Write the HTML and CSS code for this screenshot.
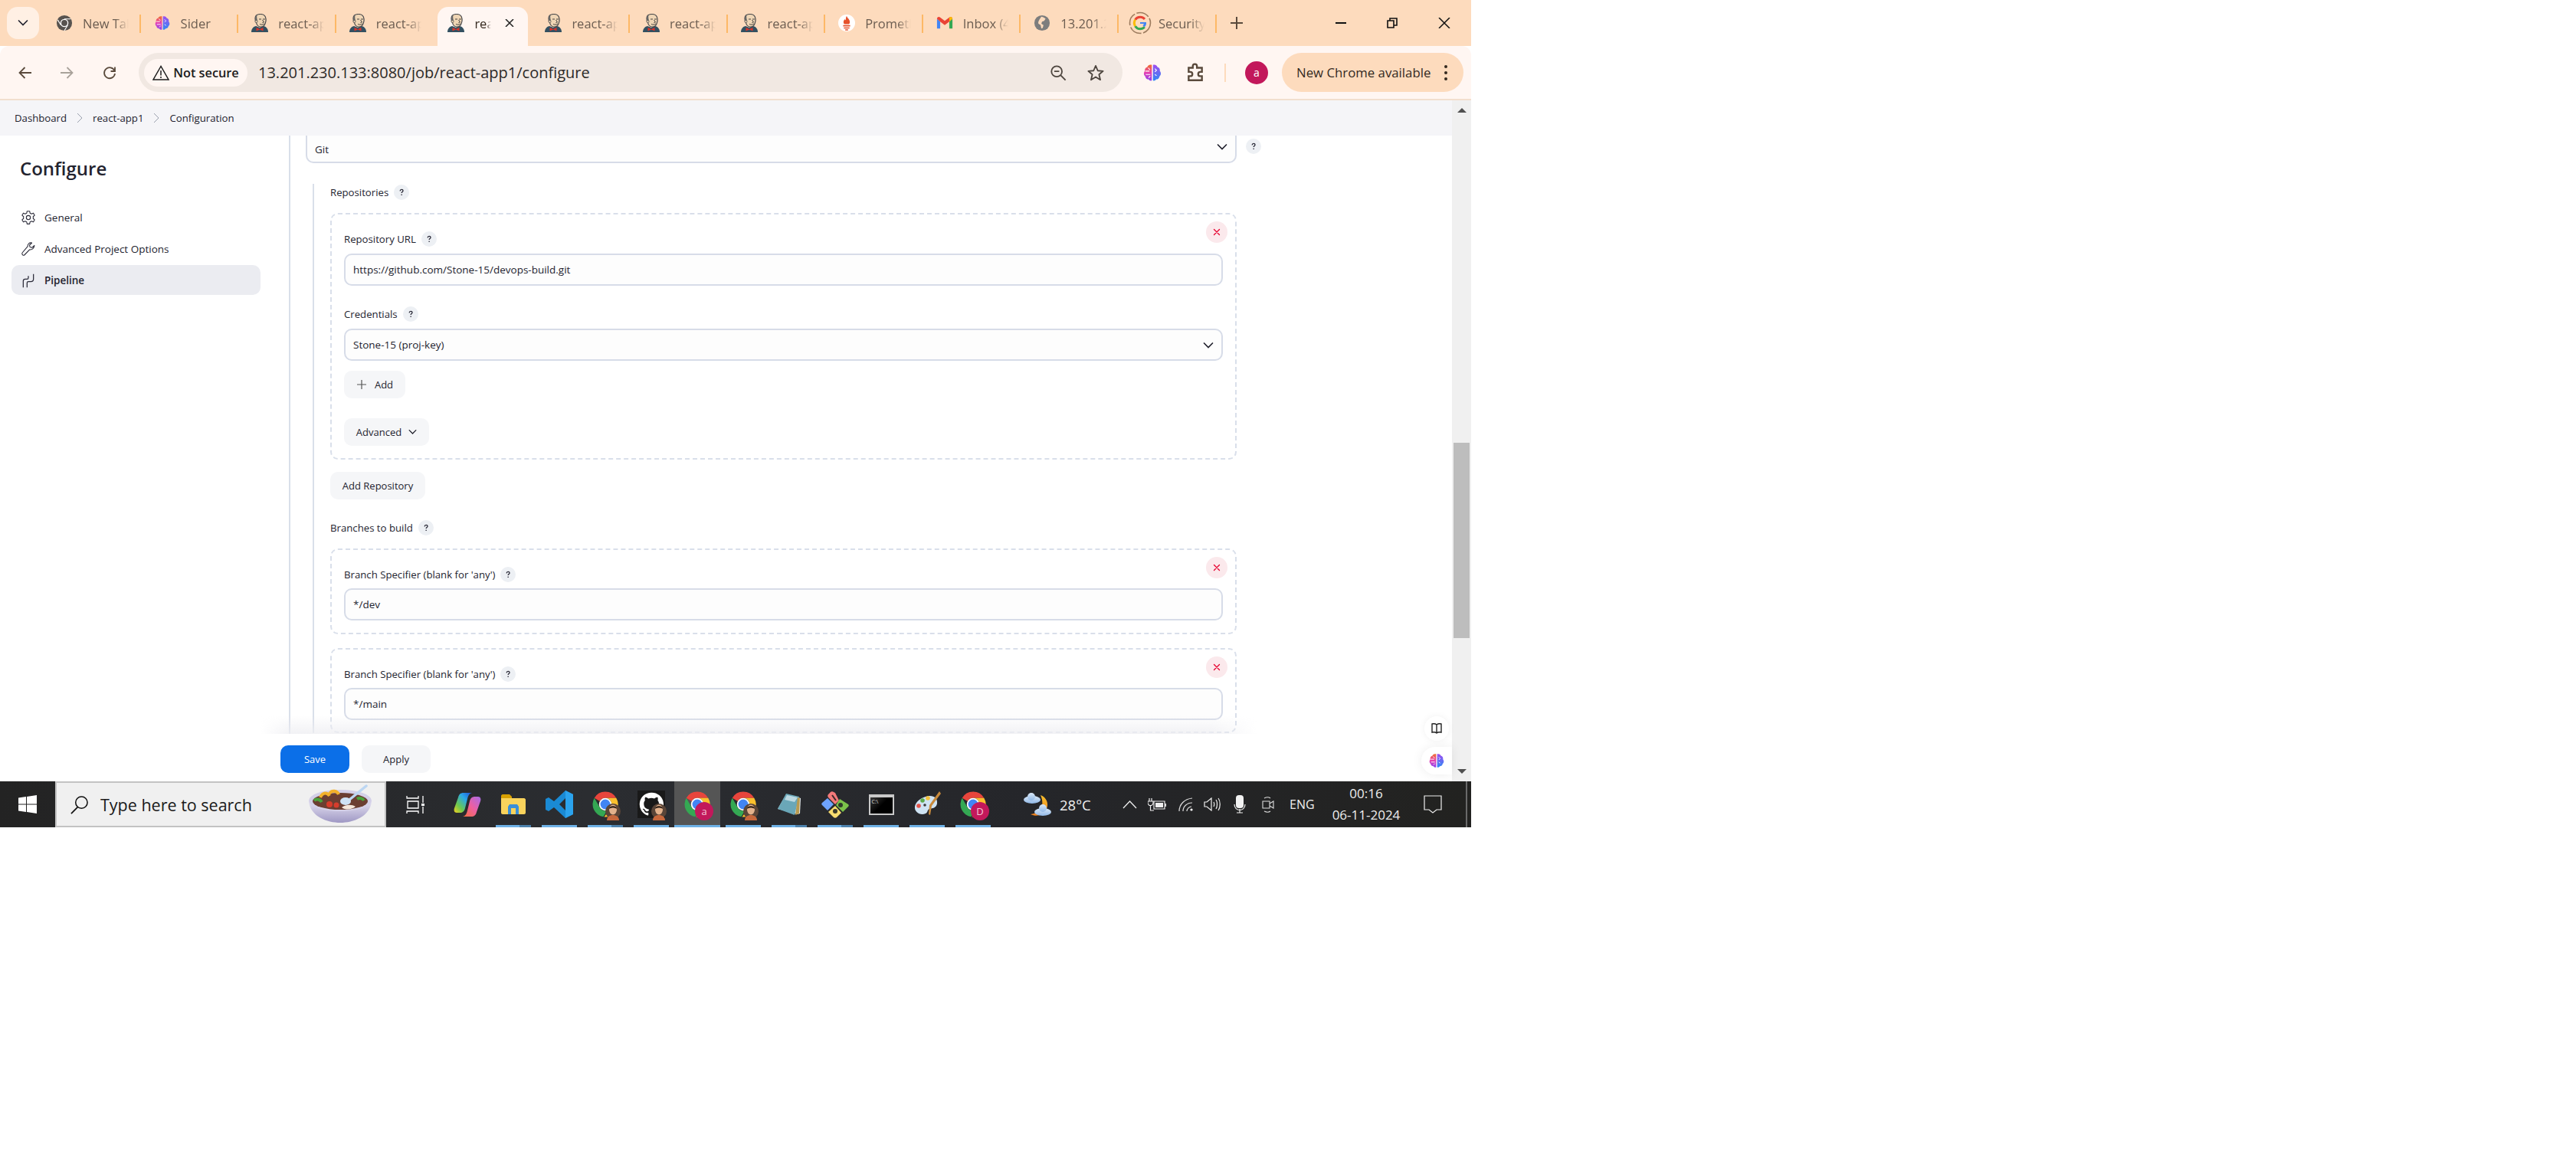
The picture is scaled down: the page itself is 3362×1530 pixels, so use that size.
FILE: index.html
```html
<!DOCTYPE html>
<html lang="en">
<head>
  <meta charset="UTF-8">
  <title>react-app1 Config [Jenkins]</title>
  <link rel="stylesheet" href="styles.css">
</head>
<body>

  <!-- shared icons -->
  <svg class="sprites" width="0" height="0">
    <defs>
      <linearGradient id="brainLeft" x1="0" y1="0" x2="0" y2="1">
        <stop offset="0" stop-color="#f0702a"/><stop offset=".5" stop-color="#e63fb4"/><stop offset="1" stop-color="#8b45f0"/>
      </linearGradient>
      <linearGradient id="brainRight" x1="0" y1="0" x2="0" y2="1">
        <stop offset="0" stop-color="#a04df0"/><stop offset="1" stop-color="#2f8af5"/>
      </linearGradient>
      <linearGradient id="copilotA" x1="1" y1="0" x2="0" y2="1">
        <stop offset="0" stop-color="#1f4fd8"/><stop offset=".35" stop-color="#2aa8e8"/><stop offset=".7" stop-color="#6cc94e"/><stop offset="1" stop-color="#f5d020"/>
      </linearGradient>
      <linearGradient id="copilotB" x1="1" y1="0" x2="0" y2="1">
        <stop offset="0" stop-color="#a86be8"/><stop offset=".5" stop-color="#ee5fa0"/><stop offset="1" stop-color="#f4703a"/>
      </linearGradient>
      <linearGradient id="bowlGrad" x1="0" y1="0" x2="0" y2="1">
        <stop offset="0" stop-color="#e4e1f2"/><stop offset="1" stop-color="#9f98c4"/>
      </linearGradient>
      <linearGradient id="moonGrad" x1="0" y1="0" x2="0" y2="1">
        <stop offset="0" stop-color="#f8c02c"/><stop offset="1" stop-color="#ee7f1c"/>
      </linearGradient>
      <linearGradient id="cloudGrad" x1="0" y1="0" x2="0" y2="1">
        <stop offset="0" stop-color="#dbe9f8"/><stop offset="1" stop-color="#8fb7e6"/>
      </linearGradient>
    </defs>

    <symbol id="i-jenkins" viewBox="0 0 22 24">
      <path d="M0 24c0-4 2-7 6-8l5 2 5-2c4 1 6 4 6 8z" fill="#335061"/>
      <path d="M5 6C5 2.500 8 .5 12 .5c4 0 6.500 2.500 7 6 .5 3-.5 5-1 6.500-1 2.500-3.500 4.500-6.500 4-3-.5-4.500-3-5-5.500C5 10 5 8 5 6z" fill="#f0d6b5" stroke="#49494b" stroke-width="1.200"/>
      <path d="M5 6c0-2 1-3.500 2.500-4.500-.5 2.500-.3 5 .5 7L5.500 11C5 9 5 7.500 5 6z" fill="#666"/>
      <circle cx="6.500" cy="10" r="1.600" fill="#f0d6b5" stroke="#49494b" stroke-width=".7"/>
      <path d="M10 7h3M15 7h3M14.500 8l2 3-2 .5M11 13.500c2 1 4 .8 6-.5" fill="none" stroke="#333" stroke-width=".9"/>
      <path d="M6.500 18l4.500 2 4.500-2v4.500L11 20.500l-4.500 2z" fill="#d8332a"/>
    </symbol>

    <symbol id="i-chrome" viewBox="0 0 24 24">
      <path d="M12 1a11 11 0 0 1 9.530 5.500H12a5.500 5.500 0 0 0-4.760 2.750L2.470 6.500A11 11 0 0 1 12 1z" fill="#e8453c"/>
      <path d="M2.470 6.500l4.770 8.250A5.500 5.500 0 0 0 13.540 17.290L10.300 22.870A11 11 0 0 1 2.470 6.500z" fill="#34a853"/>
      <path d="M21.530 6.500H12a5.500 5.500 0 0 1 4.760 8.250L11 23a11 11 0 0 0 10.530-16.500z" fill="#fbc02d"/>
      <circle cx="12" cy="12" r="5.500" fill="#fff"/><circle cx="12" cy="12" r="4.300" fill="#4285f4"/>
    </symbol>

    <symbol id="i-chrome-mono" viewBox="0 0 24 24">
      <circle cx="12" cy="12" r="11" fill="#57534f"/>
      <circle cx="12" cy="12" r="5.800" fill="#fff"/><circle cx="12" cy="12" r="4.300" fill="#57534f"/>
      <path d="M12 6.200h9M7 15l-4.500-7.500M16.800 15L12 23" stroke="#fff" stroke-width="1.200"/>
    </symbol>

    <symbol id="i-sider" viewBox="0 0 24 24">
      <path d="M11.300 2.500C8 1.800 6.500 3.500 6 5 3.500 5.500 2.500 8 3 10c-1.800 2-1.500 5 .5 6.500.2 2.500 2.500 3.500 4 3.300 1 1.800 3 2.200 3.800 1.500z" fill="url(#brainLeft)"/>
      <path d="M12.700 2.500C16 1.800 17.500 3.500 18 5c2.500.5 3.500 3 3 5 1.800 2 1.500 5-.5 6.500-.2 2.500-2.500 3.500-4 3.300-1 1.800-3 2.200-3.800 1.500z" fill="url(#brainRight)"/>
      <path d="M3.500 10h5M4 14h5.500M7 6l2 2.500M7.500 18l2-2M15 7l2 2-2 2M15 14l2 1.500" stroke="#fff" stroke-width="1" fill="none"/>
    </symbol>

    <symbol id="i-prometheus" viewBox="0 0 24 24">
      <circle cx="12" cy="12" r="12" fill="#fff"/>
      <path d="M12 2c.5 3 4.500 4.500 4.500 8.500 0 1.500-.7 2.500-1.200 3H8.700c-.5-.5-1.200-1.500-1.200-3 0-2 1.300-2.800 1.800-4 .4 1 1 1.300 1.300 1.500C10.800 6 11 3.500 12 2z" fill="#e6522c"/>
      <path d="M7 15h10v2H7zM8 18.200h8V20H8zM10 21h4v1.500h-4z" fill="#e6522c"/>
    </symbol>

    <symbol id="i-gmail" viewBox="0 0 24 24">
      <path d="M1 6v14h4.500V10z" fill="#4285f4"/>
      <path d="M23 6v14h-4.500V10z" fill="#34a853"/>
      <path d="M1 6c0-2.500 2.500-3.500 4.500-2L12 9l6.500-5c2-1.500 4.500-.5 4.500 2l-4.500 4-6.500 5-6.500-5z" fill="#ea4335"/>
      <path d="M18.500 4C20.500 2.500 23 3.500 23 6l-4.500 4z" fill="#fbbc05"/>
    </symbol>

    <symbol id="i-globe" viewBox="0 0 24 24">
      <circle cx="12" cy="12" r="11" fill="#7d7d7d"/>
      <path d="M11 3c3 .5 5 2 6 3l-2 3-3 1-1 3 3 2-1 4-2 1-1-5-3-2c-1-2 .5-5 4-10z" fill="#fddbbd"/>
    </symbol>

    <symbol id="i-google" viewBox="0 0 30 30">
      <circle cx="15" cy="15" r="13.500" fill="none" stroke="#9c7b5e" stroke-width="1.600" stroke-dasharray="17 2.500"/>
      <path d="M21 10a8 8 0 0 0-6-2.700c-2.800 0-5 1.300-6.400 3.500" fill="none" stroke="#ea4335" stroke-width="3"/>
      <path d="M8.600 10.800a8 8 0 0 0 0 8.400" fill="none" stroke="#fbbc05" stroke-width="3"/>
      <path d="M8.600 19.200c1.400 2.200 3.600 3.500 6.400 3.500 2.500 0 4.500-1 5.800-2.500" fill="none" stroke="#34a853" stroke-width="3"/>
      <path d="M15 14h8c.3 2.500-.5 4.600-2.200 6.200l-2.400-1.900c.8-.6 1.300-1.400 1.500-2.300H15z" fill="#4285f4"/>
    </symbol>

    <symbol id="i-help" viewBox="0 0 16 16">
      <path d="M5.500 5.800C5.700 4 7 3.200 8.200 3.200c1.500 0 2.500 1 2.500 2.200 0 2-2.500 2-2.500 4" fill="none" stroke="#2a2a38" stroke-width="1.800"/>
      <circle cx="8.200" cy="12.300" r="1.100" fill="#2a2a38"/>
    </symbol>

    <symbol id="i-chev" viewBox="0 0 14 10">
      <path d="M1.500 2l5.500 5.500L12.500 2" fill="none" stroke="#23232f" stroke-width="1.700" stroke-linecap="round"/>
    </symbol>

    <symbol id="i-cross" viewBox="0 0 10 10">
      <path d="M1.500 1.500l7 7M8.500 1.500l-7 7" stroke="#e6002e" stroke-width="1.300" stroke-linecap="round"/>
    </symbol>

    <symbol id="i-avatar" viewBox="0 0 20 24">
      <circle cx="10" cy="12" r="10" fill="#5a4538"/>
      <ellipse cx="10" cy="10" rx="5" ry="6.500" fill="#e3b28c"/>
      <path d="M5 9c0-5 10-5 10 0-2.500-2-7.500-2-10 0z" fill="#2a1c14"/>
      <path d="M2 24c0-5 4-7 8-7s8 2 8 7z" fill="#c7683c"/>
    </symbol>
  </svg>

  <div class="screen">

    <div class="tabstrip">
      <button class="tab-search">
        <svg width="14" height="10"><use href="#i-chev"/></svg>
      </button>
      <div class="tab"><svg class="tab-icon"><use href="#i-chrome-mono"/></svg><span class="tab-title">New Tab</span></div>
      <div class="tab"><svg class="tab-icon"><use href="#i-sider"/></svg><span class="tab-title">Sider</span></div>
      <div class="tab"><svg class="tab-icon"><use href="#i-jenkins"/></svg><span class="tab-title">react-app1</span></div>
      <div class="tab tab-nosep"><svg class="tab-icon"><use href="#i-jenkins"/></svg><span class="tab-title">react-app1</span></div>
      <div class="tab tab-active">
        <svg class="tab-icon"><use href="#i-jenkins"/></svg><span class="tab-title">react-app1</span>
        <svg class="tab-close" width="12" height="10" viewBox="0 0 12 10"><path d="M1 0l10 10M11 0L1 10" stroke="#222" stroke-width="1.500"/></svg>
      </div>
      <div class="tab"><svg class="tab-icon"><use href="#i-jenkins"/></svg><span class="tab-title">react-app1</span></div>
      <div class="tab"><svg class="tab-icon"><use href="#i-jenkins"/></svg><span class="tab-title">react-app1</span></div>
      <div class="tab"><svg class="tab-icon"><use href="#i-jenkins"/></svg><span class="tab-title">react-app1</span></div>
      <div class="tab"><svg class="tab-icon"><use href="#i-prometheus"/></svg><span class="tab-title">Prometheus</span></div>
      <div class="tab"><svg class="tab-icon"><use href="#i-gmail"/></svg><span class="tab-title">Inbox (4)</span></div>
      <div class="tab"><svg class="tab-icon"><use href="#i-globe"/></svg><span class="tab-title">13.201.230.133</span></div>
      <div class="tab"><svg class="tab-icon tab-icon-big"><use href="#i-google"/></svg><span class="tab-title">Security</span></div>
      <svg class="new-tab" width="18" height="18" viewBox="0 0 18 18"><path d="M9 1v16M1 9h16" stroke="#5a4a3c" stroke-width="2"/></svg>
      <div class="window-controls">
        <svg width="16" height="14" viewBox="0 0 16 14"><path d="M1 7h14" stroke="#111" stroke-width="2"/></svg>
        <svg width="14" height="14" viewBox="0 0 14 14"><path d="M1 4h8v9H1zM4 4V1h9v9H9" fill="none" stroke="#111" stroke-width="1.600"/></svg>
        <svg width="16" height="14" viewBox="0 0 16 14"><path d="M1 0l14 14M15 0L1 14" stroke="#111" stroke-width="1.500"/></svg>
      </div>
    </div>

    <div class="toolbar">
      <svg class="nav-icon" viewBox="0 0 20 20"><path d="M18 10H3M9.500 3l-7 7 7 7" fill="none" stroke="#5a4a3c" stroke-width="1.800"/></svg>
      <svg class="nav-icon nav-off" viewBox="0 0 20 20"><path d="M2 10h15M10.500 3l7 7-7 7" fill="none" stroke="#a9a29a" stroke-width="1.800"/></svg>
      <svg class="nav-icon" viewBox="0 0 20 20"><path d="M16.500 7.500A7 7 0 1 0 17 11M17 2.500V8h-5.500" fill="none" stroke="#5a4a3c" stroke-width="1.800"/></svg>

      <div class="omnibox">
        <div class="security-chip">
          <svg width="22" height="20" viewBox="0 0 22 20"><path d="M11 1.500L1 19h20zM11 7v6.500M11 15v2" fill="none" stroke="#1c1c1c" stroke-width="1.500"/></svg>
          <span>Not secure</span>
        </div>
        <span class="url">13.201.230.133:8080/job/react-app1/configure</span>
        <svg class="omni-zoom" width="22" height="22" viewBox="0 0 24 24"><circle cx="10" cy="10" r="7.500" fill="none" stroke="#4d453e" stroke-width="2"/><path d="M6.500 10h7M15.500 15.500l7 7" stroke="#4d453e" stroke-width="2"/></svg>
        <svg class="omni-star" width="22" height="22" viewBox="0 0 24 24"><path d="M12 2l3 7 7.500.6-5.700 4.900 1.800 7.500L12 18l-6.600 4 1.800-7.500L1.500 9.600 9 9z" fill="none" stroke="#4d453e" stroke-width="2" stroke-linejoin="round"/></svg>
      </div>

      <svg class="tool-sider"><use href="#i-sider"/></svg>
      <svg class="tool-puzzle" viewBox="0 0 24 24"><path d="M4 6h5V4a2.500 2.500 0 0 1 5 0v2h6v5h-2a2.500 2.500 0 0 0 0 5h2v5H4v-5h2a2.500 2.500 0 0 0 0-5H4z" fill="none" stroke="#5a4a3c" stroke-width="2.200"/></svg>
      <span class="tool-sep"></span>
      <span class="avatar">a</span>
      <div class="update-pill">
        <span>New Chrome available</span>
        <span class="dots"><i></i><i></i><i></i></span>
      </div>
    </div>

    <div class="viewport">
      <div class="page">
        <div class="crumbs">
          <span>Dashboard</span>
          <svg width="8" height="14" viewBox="0 0 8 14"><path d="M1 1l6 6-6 6" fill="none" stroke="#9aa0ad" stroke-width="1"/></svg>
          <span>react-app1</span>
          <svg width="8" height="14" viewBox="0 0 8 14"><path d="M1 1l6 6-6 6" fill="none" stroke="#9aa0ad" stroke-width="1"/></svg>
          <span>Configuration</span>
        </div>

        <div class="workspace">
          <aside class="sidebar">
            <h1>Configure</h1>
            <a class="side-item">
              <svg viewBox="0 0 24 24"><path d="M10 2h4l.6 3L17 6.200l2.800-1.200 2 3.500-2.300 2a6 6 0 0 1 0 3l2.300 2-2 3.500-2.800-1.200L14.600 19 14 22h-4l-.6-3L7 17.800 4.200 19l-2-3.500 2.300-2a6 6 0 0 1 0-3l-2.300-2 2-3.500L7 6.200 9.400 5z" fill="none" stroke="#2a2a38" stroke-width="1.300" stroke-linejoin="round"/><circle cx="12" cy="12" r="3.200" fill="none" stroke="#2a2a38" stroke-width="1.300"/></svg>
              General
            </a>
            <a class="side-item">
              <svg viewBox="0 0 24 24"><path d="M21.500 6.500l-4 3.500-3-1-.7-3 3.700-3.500c-3.500-1-7 1.500-6.500 5.500L2.500 18c-1.500 2 1.500 5 3.500 3.300l8-8.300c4 .8 7-2.500 7.500-6.500z" fill="none" stroke="#2a2a38" stroke-width="1.300" stroke-linejoin="round"/></svg>
              Advanced Project Options
            </a>
            <a class="side-item side-active">
              <svg viewBox="0 0 24 24"><path d="M4 23V13c0-2 1-3 3-3h3c1.500 0 2-1 2-2V5M10 23v-7c0-1 .5-2 2-2h4c3 0 4-1.500 4-4V2" fill="none" stroke="#2a2a38" stroke-width="1.500"/></svg>
              Pipeline
            </a>
          </aside>

          <main class="form-rail">
            <div class="scm-row">
              <div class="select select-scm">Git
                <svg width="14" height="10"><use href="#i-chev"/></svg>
              </div>
              <span class="help"><svg><use href="#i-help"/></svg></span>
            </div>

            <div class="inner-rail">
              <div class="label-row">Repositories <span class="help"><svg><use href="#i-help"/></svg></span></div>

              <div class="dashed repo-box">
                <button class="remove"><svg><use href="#i-cross"/></svg></button>
                <div class="label-row">Repository URL <span class="help"><svg><use href="#i-help"/></svg></span></div>
                <div class="input">https://github.com/Stone-15/devops-build.git</div>
                <div class="label-row label-second">Credentials <span class="help"><svg><use href="#i-help"/></svg></span></div>
                <div class="select">Stone-15 (proj-key)
                  <svg width="14" height="10"><use href="#i-chev"/></svg>
                </div>
                <button class="btn btn-add">
                  <svg width="14" height="14" viewBox="0 0 14 14"><path d="M7 1v12M1 7h12" stroke="#555" stroke-width="1.200"/></svg>
                  Add
                </button>
                <button class="btn btn-advanced">Advanced
                  <svg width="11" height="8"><use href="#i-chev"/></svg>
                </button>
              </div>

              <button class="btn btn-repo">Add Repository</button>

              <div class="label-row label-branches">Branches to build <span class="help"><svg><use href="#i-help"/></svg></span></div>

              <div class="dashed branch-box">
                <button class="remove"><svg><use href="#i-cross"/></svg></button>
                <div class="label-row">Branch Specifier (blank for 'any') <span class="help"><svg><use href="#i-help"/></svg></span></div>
                <div class="input">*/dev</div>
              </div>

              <div class="dashed branch-box">
                <button class="remove"><svg><use href="#i-cross"/></svg></button>
                <div class="label-row">Branch Specifier (blank for 'any') <span class="help"><svg><use href="#i-help"/></svg></span></div>
                <div class="input">*/main</div>
              </div>
            </div>
          </main>

          <div class="bottom-fade"></div>
        </div>

        <div class="actions">
          <button class="btn-save">Save</button>
          <button class="btn-apply">Apply</button>
        </div>

        <!-- sider extension buttons -->
        <span class="float-book">
          <svg width="16" height="16" viewBox="0 0 16 16"><path d="M8 3C6.500 1.800 4 1.500 2 2v11c2-.5 4.500-.2 6 1 1.500-1.200 4-1.500 6-1V2c-2-.5-4.500-.2-6 1zM8 3v11" fill="none" stroke="#222" stroke-width="1.400"/></svg>
        </span>
        <span class="float-sider"><svg width="22" height="22"><use href="#i-sider"/></svg></span>
      </div>

      <div class="scrollbar">
        <span class="arrow-up"></span>
        <div class="scroll-track"><div class="scroll-thumb"></div></div>
        <span class="arrow-down"></span>
      </div>
    </div>

    <div class="taskbar">
      <span class="start">
        <svg width="24" height="24" viewBox="0 0 24 24"><path d="M0 3.500l10-1.400v9.400H0zM11 2l13-2v11.500H11zM0 12.500h10v9.400L0 20.500zM11 12.500h13V24l-13-2z" fill="#fff"/></svg>
      </span>
      <div class="search-box">
        <svg width="25" height="25" viewBox="0 0 26 26"><circle cx="16" cy="10" r="8" fill="none" stroke="#111" stroke-width="1.600"/><path d="M11 16L2 25" stroke="#111" stroke-width="1.800"/></svg>
        <span>Type here to search</span>
        <svg class="bowl" width="84" height="51" viewBox="0 0 84 51">
          <path d="M1 22c2 20 24 28 41 28s39-8 41-28z" fill="url(#bowlGrad)"/>
          <ellipse cx="42" cy="21" rx="41" ry="14" fill="#d4d0e8"/>
          <ellipse cx="42" cy="22" rx="36" ry="11" fill="#6b3e32"/>
          <path d="M16 17c3-7 9-7 12-2M28 12c3-5 10-4 12 1" fill="none" stroke="#f2b02a" stroke-width="4"/>
          <path d="M8 21c4-3 8-1 10 2M64 19c3-2 7-1 9 2" fill="none" stroke="#4aa33c" stroke-width="4"/>
          <circle cx="28" cy="26" r="4" fill="#d63c2c"/><circle cx="37" cy="27" r="3.500" fill="#d63c2c"/>
          <path d="M44 30c6-4 13-4 18-1-5 4-13 5-18 1z" fill="#f4e6da"/>
          <path d="M76 2L54 20" stroke="#bcd6f2" stroke-width="3.500" stroke-linecap="round"/>
          <ellipse cx="49" cy="22" rx="7" ry="5" fill="#cfe2f5"/>
        </svg>
      </div>

      <span class="task-view">
        <svg width="24" height="23" viewBox="0 0 24 23"><path d="M1 0v3h15V0M2 7h14v9H2zM1 23v-3h15v3M22 0v9M22 14v9" fill="none" stroke="#fff" stroke-width="1.300"/><rect x="20" y="10" width="4" height="3" fill="#fff"/></svg>
      </span>

      <div class="task-icons">
        <span class="task-slot">
          <svg width="36" height="33" viewBox="0 0 36 33"><path d="M13 1h11c-4 1-5 4-6 8l-3 12c-1 4-3 6-7 6H4c-3 0-4-3-3-6l5-14C7 3 9 1 13 1z" fill="url(#copilotA)"/><path d="M23 32H12c4-1 5-4 6-8l3-12c1-4 3-6 7-6h4c3 0 4 3 3 6l-5 14c-1 4-3 6-7 6z" fill="url(#copilotB)"/></svg>
        </span>
        <span class="task-slot is-open is-multi">
          <svg width="32" height="26" viewBox="0 0 32 26"><path d="M0 2c0-1 1-2 2-2h9l3 3v6H0z" fill="#d8a000"/><path d="M0 5h30c1 0 2 1 2 2v17c0 1-1 2-2 2H2c-1 0-2-1-2-2z" fill="#f9d35c"/><path d="M9 26V16l2-3h10l2 3v10h-4v-8h-6v8z" fill="#3a8fd8"/></svg>
        </span>
        <span class="task-slot is-open">
          <svg width="36" height="36" viewBox="0 0 36 36"><path d="M26 0l10 5v26l-10 5-15-14-7 5-4-2V11l4-2 7 5zM26 10l-8 8 8 8z" fill="#1a8ad4"/><path d="M26 0l10 5v26l-10 5z" fill="#2ba3ee"/></svg>
        </span>
        <span class="task-slot is-open is-multi">
          <svg width="36" height="36"><use href="#i-chrome"/></svg>
          <svg class="badge-pic" width="20" height="24"><use href="#i-avatar"/></svg>
        </span>
        <span class="task-slot is-open">
          <span class="github-tile">
            <svg width="32" height="32" viewBox="0 0 24 24"><path fill="#fff" d="M12 .5a11.500 11.500 0 0 0-3.600 22.400c.6.100.8-.2.800-.6v-2.100c-3.200.7-3.900-1.400-3.900-1.400-.5-1.300-1.300-1.700-1.300-1.700-1-.7.100-.7.100-.7 1.200.1 1.800 1.200 1.800 1.200 1 1.800 2.700 1.300 3.400 1 .1-.8.400-1.300.7-1.600-2.600-.3-5.300-1.300-5.300-5.700 0-1.300.5-2.300 1.200-3.100-.1-.3-.5-1.500.1-3.100 0 0 1-.3 3.200 1.200a11 11 0 0 1 5.800 0c2.200-1.500 3.200-1.200 3.200-1.200.6 1.600.2 2.800.1 3.100.7.800 1.200 1.800 1.200 3.100 0 4.400-2.700 5.400-5.300 5.700.4.400.8 1.100.8 2.200v3.200c0 .3.200.7.800.6A11.500 11.500 0 0 0 12 .5z"/></svg>
          </span>
          <svg class="badge-pic" width="20" height="24"><use href="#i-avatar"/></svg>
        </span>
        <span class="task-slot is-open is-active">
          <svg width="36" height="36"><use href="#i-chrome"/></svg>
          <span class="badge-letter">a</span>
        </span>
        <span class="task-slot is-open">
          <svg width="36" height="36"><use href="#i-chrome"/></svg>
          <svg class="badge-pic" width="20" height="24"><use href="#i-avatar"/></svg>
        </span>
        <span class="task-slot is-open is-multi">
          <svg width="32" height="30" viewBox="0 0 32 30"><path d="M12 2l19 5-1 20-3 1L1 21z" fill="#e8eef0"/><path d="M12 1l17 4-6 24L1 21z" fill="#6aa7b8"/><path d="M13 3l14 3-4 6-13-3z" fill="#bcd9e2"/><path d="M27 6l3 1-1 20-5 2z" fill="#b89a50"/></svg>
        </span>
        <span class="task-slot is-open is-multi">
          <svg width="36" height="36" viewBox="0 0 36 36"><path d="M18 3l-2-1c-1-1-3-1-4 0L9 5c-1 1-1 3 0 4l9 9 5-5z" fill="#f47a7a"/><path d="M8 10l8 8-8 8-7-7c-1-1-1-2 0-3z" fill="#6ea3ff"/><path d="M24 11l11 7c1 1 1 2 0 3l-7 7-9-9z" fill="#7cc24a"/><path d="M18 20l8 9-6 6c-1 1-3 1-4 0l-7-7z" fill="#f7dc6f"/><circle cx="18" cy="27" r="3" fill="#3a3a2a"/><circle cx="25" cy="19" r="3" fill="#2f3a2a"/><path d="M14 6l5 7" stroke="#3a2a2a" stroke-width="2"/></svg>
        </span>
        <span class="task-slot is-open">
          <span class="cmd-tile"><span>C:\</span></span>
        </span>
        <span class="task-slot is-open">
          <svg width="35" height="34" viewBox="0 0 35 34"><path d="M15 7C24 4 31 8 30 16c-1 6-6 6-10 7-3 1-2 5-5 6C8 32 0 27 1 20 2 14 8 9 15 7z" fill="#cfe3f3"/><circle cx="6" cy="19" r="2.800" fill="#e4544a"/><circle cx="11" cy="12" r="2.800" fill="#5cab4a"/><circle cx="18" cy="9" r="2.800" fill="#f2c03a"/><circle cx="14" cy="18" r="1.800" fill="#3a3a3a"/><path d="M33 0l2 3-12 16-2 12-2-1 1-12z" fill="#c88a3c"/></svg>
        </span>
        <span class="task-slot is-open">
          <svg width="36" height="36"><use href="#i-chrome"/></svg>
          <span class="badge-letter">D</span>
        </span>
      </div>

      <div class="tray">
        <svg class="weather" width="37" height="33" viewBox="0 0 37 33"><path d="M23 4c8 3 11 11 8 18-3 8-13 11-21 7 8-1 13-5 15-11 1-5 0-10-2-14z" fill="url(#moonGrad)"/><ellipse cx="12" cy="10" rx="11" ry="5" fill="url(#cloudGrad)"/><circle cx="11" cy="6" r="5" fill="url(#cloudGrad)"/><ellipse cx="26" cy="26" rx="11" ry="5" fill="url(#cloudGrad)"/><circle cx="26" cy="21" r="5" fill="url(#cloudGrad)"/></svg>
        <span class="temp">28°C</span>
        <svg class="tray-up" width="19" height="11" viewBox="0 0 19 11"><path d="M1 10l8.500-9L18 10" fill="none" stroke="#eee" stroke-width="1.300"/></svg>
        <svg class="tray-batt" width="24" height="17" viewBox="0 0 24 17"><path d="M8 4h14v10H8z" fill="none" stroke="#eee" stroke-width="1.200"/><path d="M10 6h10v6H10z" fill="#eee"/><path d="M22.500 7H24v4h-1.500z" fill="#eee"/><path d="M2 0v4M5 0v4M0 4h7v3L5 9.500H2L0 7zM3.500 9.500V16H8" fill="none" stroke="#eee" stroke-width="1.200"/></svg>
        <svg class="tray-wifi" width="19" height="18" viewBox="0 0 19 18"><path d="M1 18C1 9 8 2 18 1M6 18c0-6 5-11 12-11M11 18c0-3 3-6 6-6" fill="none" stroke="#ddd" stroke-width="1.200"/><circle cx="17" cy="16" r="1.600" fill="#fff"/></svg>
        <svg class="tray-sound" width="22" height="18" viewBox="0 0 22 18"><path d="M1 6h3l6-5v16l-6-5H1zM13 6c1 2 1 4 0 6M16 3c2 3 2 9 0 12M19 1c3 4 3 12 0 16" fill="none" stroke="#eee" stroke-width="1.200"/></svg>
        <svg class="tray-mic" width="16" height="24" viewBox="0 0 16 24"><rect x="3" y="0" width="10" height="17" rx="4" fill="#f2f2f2"/><path d="M1 12c0 10 14 10 14 0M8 18v5M4 23h8" fill="none" stroke="#eee" stroke-width="1.200"/></svg>
        <svg class="tray-video" width="16" height="23" viewBox="0 0 16 23"><path d="M1 7h9v9H1zM10 10l5-3v9l-5-3zM3 3c3-1.500 6-1.500 8 0M3 20c3 1.500 6 1.500 8 0" fill="none" stroke="#ddd" stroke-width="1.100"/></svg>
        <span class="lang">ENG</span>
        <div class="clock"><span>00:16</span><span>06-11-2024</span></div>
        <svg class="tray-note" width="24" height="24" viewBox="0 0 24 24"><path d="M1 1h22v18h-6l-5 4-5-4H1z" fill="none" stroke="#eee" stroke-width="1.200"/></svg>
        <span class="show-desktop"></span>
      </div>
    </div>
  </div>

</body>
</html>
```

FILE: styles.css
```css
body {
  margin: 0;
  background: #fff;
  font-family: "Open Sans", "Noto Sans", sans-serif;
  color: #23232f;
}

button {
  font-family: inherit;
  border: none;
  padding: 0;
}

.sprites {
  position: absolute;
}

.screen {
  width: 1920px;
  height: 1080px;
  display: flex;
  flex-direction: column;
}

/* 탭 줄 */
.tabstrip {
  height: 60px;
  background: #fddbbd;
  display: flex;
  align-items: flex-end;
  padding-left: 9px;
}

.tab-search {
  width: 42px;
  height: 42px;
  margin: 0 5px 9px 0;
  border-radius: 14px;
  background: #fff0e4;
  display: flex;
  align-items: center;
  justify-content: center;
}

.tab {
  width: 127.6px;
  height: 51px;
  box-sizing: border-box;
  padding: 0 16px 9px 17px;
  display: flex;
  align-items: center;
  gap: 13px;
  font-size: 16.5px;
  color: #6a5c50;
  background: linear-gradient(#fdb866, #fdb866) right 10px / 2px 24px no-repeat;
}

.tab-nosep {
  background: none;
}

.tab-active {
  background: #fff6f2;
  border-radius: 14px 14px 0 0;
  margin: 0 5px;
  width: 118px;
  padding: 0 18px 9px 13px;
  color: #33291f;
}

.tab-icon {
  width: 22px;
  height: 24px;
  flex: none;
}

.tab-icon-big {
  width: 30px;
  height: 30px;
  margin-left: -4px;
  margin-right: -4px;
}

.tab-title {
  flex: 1;
  min-width: 0;
  overflow: hidden;
  white-space: nowrap;
  -webkit-mask-image: linear-gradient(90deg, #000 70%, transparent);
  mask-image: linear-gradient(90deg, #000 70%, transparent);
}

.tab-close {
  flex: none;
  margin-left: 5px;
}

.new-tab {
  margin: 0 0 21px 17px;
}

.window-controls {
  margin-left: 119px;
  width: 151px;
  display: flex;
  justify-content: space-between;
  align-items: center;
  padding-bottom: 23px;
}

/* 주소 표시줄 */
.toolbar {
  height: 69px;
  background: #fff6f2;
  border-bottom: 2px solid #f2dfce;
  border-radius: 12px 12px 0 0;
  display: flex;
  align-items: center;
}

.nav-icon {
  width: 20px;
  height: 20px;
  margin-left: 23px;
  margin-right: 11px;
}

.nav-off {
  margin-right: 13px;
}

.omnibox {
  margin-left: 17px;
  width: 1284px;
  height: 51px;
  background: #f1e8e2;
  border-radius: 26px;
  display: flex;
  align-items: center;
  padding-left: 7px;
  box-sizing: border-box;
}

.security-chip {
  width: 135px;
  height: 36px;
  background: #fff6f2;
  border-radius: 18px;
  display: flex;
  align-items: center;
  justify-content: center;
  gap: 5px;
  font-size: 16.3px;
  font-weight: 600;
  color: #1c1c1c;
  white-space: nowrap;
}

.url {
  margin-left: 14px;
  font-size: 20px;
  color: #2d2a28;
  flex: 1;
}

.omni-zoom {
  margin-right: 27px;
}

.omni-star {
  margin-right: 24px;
}

.tool-sider {
  width: 26px;
  height: 26px;
  margin-left: 26px;
}

.tool-puzzle {
  width: 26px;
  height: 26px;
  margin-left: 30px;
}

.tool-sep {
  width: 2px;
  height: 24px;
  background: #fddbbd;
  margin-left: 25px;
}

.avatar {
  width: 30px;
  height: 30px;
  margin-left: 25px;
  border-radius: 50%;
  background: #c2185b;
  color: #fff;
  font-size: 14px;
  display: flex;
  align-items: center;
  justify-content: center;
}

.update-pill {
  width: 237px;
  height: 51px;
  box-sizing: border-box;
  margin-left: 18px;
  padding: 0 21px 0 19px;
  background: #fddbbd;
  border-radius: 26px;
  display: flex;
  align-items: center;
  justify-content: space-between;
  font-size: 16.8px;
  color: #33291f;
  white-space: nowrap;
}

.dots {
  display: flex;
  flex-direction: column;
  gap: 4px;
}

.dots i {
  width: 4px;
  height: 4px;
  border-radius: 50%;
  background: #33291f;
}

/* 페이지 영역 */
.viewport {
  height: 889px;
  display: flex;
}

.page {
  position: relative;
  width: 1895px;
  display: flex;
  flex-direction: column;
}

.crumbs {
  height: 46px;
  flex: none;
  background: #f5f5f8;
  display: flex;
  align-items: center;
  gap: 13px;
  padding-left: 19px;
  font-size: 13.2px;
  font-weight: 500;
}

.workspace {
  position: relative;
  height: 781px;
  flex: none;
  overflow: hidden;
  display: flex;
}

.sidebar {
  width: 325px;
  flex: none;
  margin: 0 37px 0 15px;
}

.sidebar h1 {
  margin: 24px 0 0 11px;
  font-size: 24px;
  font-weight: 600;
  line-height: 38px;
}

.side-item {
  height: 39px;
  margin-top: 2px;
  padding-left: 12px;
  display: flex;
  align-items: center;
  gap: 11px;
  font-size: 13.5px;
  border-radius: 10px;
}

.sidebar h1 + .side-item {
  margin-top: 25px;
}

.side-item svg {
  width: 20px;
  height: 22px;
}

.side-active {
  background: #ebecf1;
  font-weight: 600;
}

.form-rail {
  width: 1290px;
  flex: none;
  box-sizing: border-box;
  border-left: 2px solid #d9dfea;
  padding-left: 20px;
}

.scm-row {
  display: flex;
  align-items: flex-start;
}

.select,
.input {
  position: relative;
  height: 42px;
  box-sizing: border-box;
  border: 2px solid #d7dce8;
  border-radius: 10px;
  background: #fdfdfd;
  padding-left: 10px;
  display: flex;
  align-items: center;
  font-size: 13.5px;
}

.select svg {
  position: absolute;
  right: 10px;
  top: 15px;
}

.select-scm {
  width: 1215px;
  flex: none;
  height: 36px;
  border-top: none;
  border-radius: 0 0 10px 10px;
  padding-top: 2px;
}

.select-scm svg {
  top: 10px;
}

.help {
  width: 20px;
  height: 20px;
  flex: none;
  border-radius: 50%;
  background: #edf0f4;
  display: inline-flex;
  align-items: center;
  justify-content: center;
}

.help svg {
  width: 12px;
  height: 12px;
}

.scm-row .help {
  margin: 4px 0 0 12px;
}

.inner-rail {
  width: 1206px;
  box-sizing: border-box;
  margin: 27px 0 0 9px;
  border-left: 2px solid #d9dfea;
  padding: 1px 0 0 21px;
}

.label-row {
  height: 20px;
  display: flex;
  align-items: center;
  gap: 7px;
  font-size: 13.2px;
}

.dashed {
  position: relative;
  box-sizing: border-box;
  border: 2px dashed #d9dfea;
  border-radius: 10px;
  margin-top: 17px;
  padding: 0 16px;
}

.repo-box {
  height: 322px;
  padding-top: 22px;
}

.repo-box > .input {
  margin-top: 9px;
}

.branch-box > .input {
  margin-top: 8px;
}

.label-second {
  margin-top: 27px;
}

.repo-box > .select {
  margin-top: 9px;
}

.remove {
  position: absolute;
  top: 9px;
  right: 10px;
  width: 28px;
  height: 28px;
  border-radius: 50%;
  background: #fbe9ec;
  display: flex;
  align-items: center;
  justify-content: center;
}

.remove svg {
  width: 10px;
  height: 10px;
}

.btn {
  height: 36px;
  border-radius: 10px;
  background: #f5f6f8;
  color: #23232f;
  font-size: 13px;
  display: flex;
  align-items: center;
  justify-content: center;
}

.btn-add {
  width: 80px;
  margin-top: 13px;
  gap: 10px;
}

.btn-advanced {
  width: 111px;
  margin-top: 26px;
  gap: 9px;
}

.btn-repo {
  width: 124px;
  margin-top: 16px;
}

.label-branches {
  margin-top: 27px;
}

.branch-box {
  height: 112px;
  padding-top: 22px;
}

.branch-box + .branch-box {
  margin-top: 18px;
  height: 111px;
}

.bottom-fade {
  position: absolute;
  left: 340px;
  bottom: 0;
  width: 1300px;
  height: 24px;
  background: linear-gradient(rgba(238, 238, 242, 0), rgba(238, 238, 242, 0.8));
  -webkit-mask-image: linear-gradient(90deg, transparent, #000 40px, #000 1240px, transparent);
  mask-image: linear-gradient(90deg, transparent, #000 40px, #000 1240px, transparent);
}

.actions {
  flex: 1;
  display: flex;
  align-items: flex-start;
  gap: 16px;
  padding: 15px 0 0 366px;
}

.btn-save,
.btn-apply {
  width: 90px;
  height: 36px;
  border-radius: 10px;
  font-size: 13px;
  font-weight: 500;
}

.btn-save {
  background: #0b6fe8;
  color: #fff;
}

.btn-apply {
  background: #f5f6f8;
  color: #23232f;
}

.float-book {
  position: absolute;
  left: 1859px;
  top: 804px;
  width: 32px;
  height: 32px;
  border-radius: 50%;
  background: #fff;
  box-shadow: 0 0 10px rgba(0, 0, 0, 0.06);
  display: flex;
  align-items: center;
  justify-content: center;
}

.float-sider {
  position: absolute;
  left: 1855px;
  top: 844px;
  width: 40px;
  height: 36px;
  border-radius: 18px 0 0 18px;
  background: #fff;
  box-shadow: 0 0 14px rgba(0, 0, 0, 0.07);
  display: flex;
  align-items: center;
  justify-content: center;
}

/* 스크롤바 */
.scrollbar {
  width: 25px;
  background: #f0f0f0;
  display: flex;
  flex-direction: column;
  align-items: center;
}

.arrow-up,
.arrow-down {
  width: 0;
  height: 0;
  border-left: 6px solid transparent;
  border-right: 6px solid transparent;
  flex: none;
}

.arrow-up {
  border-bottom: 6px solid #505050;
  margin-top: 10px;
}

.arrow-down {
  border-top: 6px solid #505050;
  margin-bottom: 10px;
}

.scroll-track {
  flex: 1;
  width: 21px;
  padding-top: 431px;
  box-sizing: border-box;
}

.scroll-thumb {
  height: 255px;
  background: #bdbdbd;
}

/* 작업 표시줄 */
.taskbar {
  height: 60px;
  background: linear-gradient(90deg, #232323, #2b2d31 40%, #25262a 70%, #222220);
  display: flex;
  align-items: stretch;
  color: #eee;
}

.start {
  width: 72px;
  flex: none;
  display: flex;
  align-items: center;
  justify-content: center;
}

.search-box {
  width: 432px;
  flex: none;
  box-sizing: border-box;
  border: 2px solid #c3c3c3;
  background: #f0f0f0;
  display: flex;
  align-items: center;
  padding-left: 17px;
  color: #1a1a1a;
  font-size: 21.5px;
  position: relative;
}

.search-box span {
  margin-left: 15px;
}

.bowl {
  position: absolute;
  left: 328px;
  top: 2px;
}

.task-view {
  width: 76px;
  flex: none;
  display: flex;
  align-items: center;
  justify-content: center;
}

.task-icons {
  display: flex;
  width: 720px;
  flex: none;
}

.task-slot {
  position: relative;
  width: 60px;
  flex: none;
  display: flex;
  align-items: center;
  justify-content: center;
}

.is-open::after {
  content: "";
  position: absolute;
  left: 7px;
  right: 7px;
  bottom: 0;
  height: 3px;
  background: #6eb1e6;
}

.is-multi::after {
  background: linear-gradient(90deg, #6eb1e6 68%, #4d82ad 68%);
}

.is-active {
  background: #555;
}

.is-active::after {
  left: 0;
  right: 0;
}

.badge-pic {
  position: absolute;
  right: 10px;
  bottom: 9px;
}

.badge-letter {
  position: absolute;
  right: 9px;
  bottom: 9px;
  width: 24px;
  height: 24px;
  border-radius: 50%;
  background: #c2185b;
  color: #f4c7d8;
  font-size: 13px;
  display: flex;
  align-items: center;
  justify-content: center;
}

.github-tile {
  width: 36px;
  height: 36px;
  background: #191919;
  display: flex;
  align-items: center;
  justify-content: center;
}

.cmd-tile {
  width: 33px;
  height: 27px;
  box-sizing: border-box;
  border: 2px solid #c9c9c9;
  border-top-width: 4px;
  background: linear-gradient(135deg, #3a3a3a, #000 50%);
  font-size: 7px;
  color: #ddd;
  padding: 1px 0 0 2px;
  display: block;
  line-height: 9px;
  white-space: nowrap;
}

.tray {
  display: flex;
  align-items: center;
  flex: 1;
  font-size: 18.5px;
}

.tray svg {
  flex: none;
}

.weather {
  margin-left: 35px;
}

.temp {
  margin-left: 11px;
  width: 43px;
  white-space: nowrap;
}

.tray-up {
  margin-left: 39px;
}

.tray-batt {
  margin-left: 14px;
}

.tray-wifi {
  margin-left: 16px;
}

.tray-sound {
  margin-left: 14px;
}

.tray-mic {
  margin-left: 17px;
}

.tray-video {
  margin-left: 21px;
}

.lang {
  margin-left: 20px;
  width: 33px;
  font-size: 16px;
}

.clock {
  margin-left: 17px;
  width: 100px;
  flex: none;
  display: flex;
  flex-direction: column;
  align-items: center;
  gap: 6px;
  font-size: 17px;
  line-height: 22px;
  white-space: nowrap;
}

.tray-note {
  margin-left: 25px;
}

.show-desktop {
  align-self: stretch;
  width: 2px;
  margin-left: 31px;
  background: #6a6a6a;
}
```
